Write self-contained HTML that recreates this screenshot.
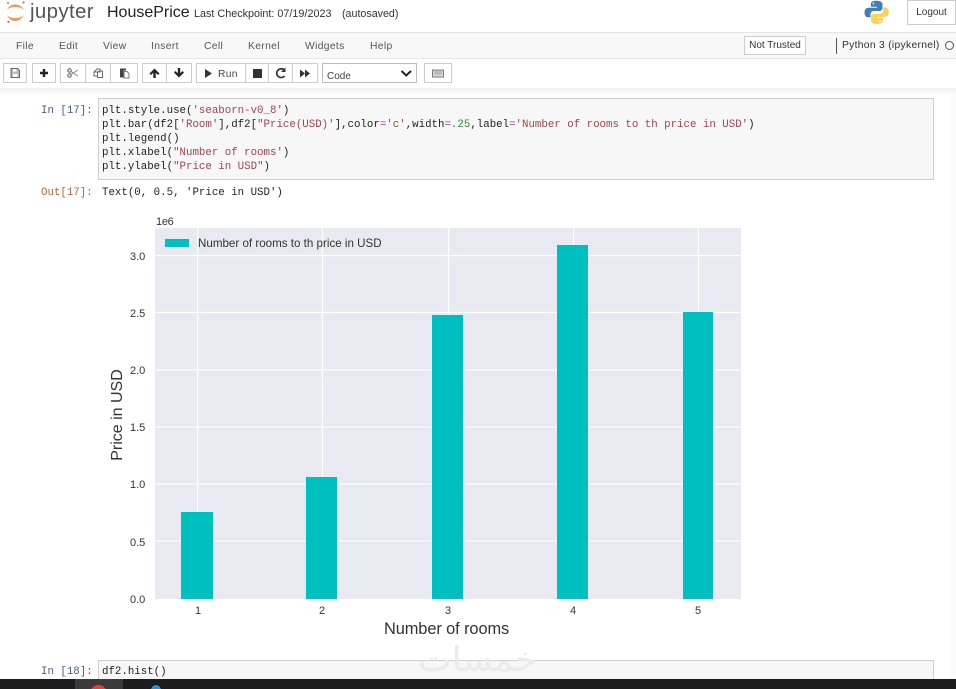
<!DOCTYPE html>
<html><head><meta charset="utf-8"><title>HousePrice</title>
<style>
html,body{margin:0;padding:0;background:#fff}
body{width:956px;height:689px;position:relative;overflow:hidden;font-family:"Liberation Sans",sans-serif;color:#333}
.a{position:absolute;white-space:pre}
.m{font-size:10.3px;color:#555;top:40px;line-height:12px;letter-spacing:.35px;margin-top:.5px}
.btn{position:absolute;top:63px;height:20px;background:#fff;border:1px solid #ccc;box-sizing:border-box}
.btn svg{position:absolute;left:0;top:0}
.code{font-family:"Liberation Mono",monospace;font-size:10.77px;line-height:14px;color:#222}
.s{color:#a4434f}.o{color:#9a3fa8}.n{color:#2e8b3d}
.p{font-family:"Liberation Mono",monospace;font-size:10.77px;line-height:14px}
.t{font-size:11px;color:#333;line-height:12px}
</style></head><body>

<!-- header -->
<svg class="a" style="left:5px;top:0" width="22" height="26" viewBox="0 0 22 26">
<path d="M2 10C5 2.500 15 2.500 19 10C15 6 5 6 2 10Z" fill="#ec9a5e"/>
<path d="M2 15C5 23 15 23 19 15C15 19 5 19 2 15Z" fill="#ec9a5e"/>
<circle cx="18.500" cy="2.500" r="1.100" fill="#a08a7a"/><circle cx="3" cy="3" r="1" fill="#a08a7a"/><circle cx="3.500" cy="22" r="1.200" fill="#a08a7a"/>
</svg>
<div class="a" style="left:30px;top:0;font-size:20.500px;line-height:24px;color:#555;letter-spacing:.35px">jupyter</div>
<div class="a" style="left:107px;top:3px;font-size:16px;line-height:20px;color:#222">HousePrice</div>
<div class="a" style="left:194px;top:8px;font-size:10.8px;line-height:12px;color:#333">Last Checkpoint: 07/19/2023</div>
<div class="a" style="left:342px;top:8px;font-size:10.7px;line-height:12px;color:#333">(autosaved)</div>

<svg class="a" style="left:864px;top:0" width="26" height="25" viewBox="0 0 26 25">
<path d="M12.500 0.800C8 0.800 6.800 2.300 6.800 4.500V6.800H12.800V7.800H4.500C2 7.800 0.500 9.800 0.500 12.500C0.500 15.500 2 17.300 4.200 17.300H6.500V14.300C6.500 12.300 8 11 10 11H15.300C17 11 18.500 9.800 18.500 8V4.500C18.500 2.300 16.500 0.800 12.500 0.800Z" fill="#3f7fb5"/>
<path d="M13 24C17.500 24 18.800 22.500 18.800 20.300V18H12.800V17H21C23.500 17 24.800 15 24.800 12.300C24.800 9.300 23.500 7.500 21.300 7.500H19.200V10.500C19.200 12.500 17.600 13.800 15.600 13.800H10.300C8.500 13.800 7 15 7 16.800V20.300C7 22.500 9 24 13 24Z" fill="#f8d25c"/>
<circle cx="9.500" cy="3.500" r="1" fill="#dfe9f2"/><circle cx="16" cy="21.300" r="1" fill="#fff4d0"/>
</svg>
<div class="a" style="left:907px;top:0;width:49px;height:25px;border:1px solid #ccc;box-sizing:border-box;font-size:10px;line-height:24px;text-align:center;color:#333">Logout</div>

<!-- menubar -->
<div class="a" style="left:0;top:32px;width:956px;height:27px;background:#f8f8f8;border-top:1px solid #e4e4e4;border-bottom:1px solid #e7e7e7;box-sizing:border-box"></div>
<div class="a m" style="left:16px">File</div>
<div class="a m" style="left:59px">Edit</div>
<div class="a m" style="left:103px">View</div>
<div class="a m" style="left:151px">Insert</div>
<div class="a m" style="left:204px">Cell</div>
<div class="a m" style="left:248px">Kernel</div>
<div class="a m" style="left:305px">Widgets</div>
<div class="a m" style="left:370px">Help</div>
<div class="a" style="left:744px;top:36px;width:62px;height:19px;background:#fff;border:1px solid #ccc;box-sizing:border-box;font-size:10px;line-height:18px;text-align:center;color:#333">Not Trusted</div>
<div class="a" style="left:836px;top:38px;width:1px;height:16px;background:#555"></div>
<div class="a" style="left:842px;top:40px;font-size:10.3px;line-height:12px;color:#333;letter-spacing:.3px">Python 3 (ipykernel)</div>
<div class="a" style="left:945px;top:41px;width:9px;height:9px;border:1.500px solid #555;border-radius:50%;box-sizing:border-box"></div>

<!-- toolbar -->
<div class="btn" style="left:3px;width:24px"><svg width="22" height="18" viewBox="0 0 22 18"><path d="M7 4.500h6.500l2 2V13.500H7Z" fill="#bbb" stroke="#666"/><rect x="9" y="5" width="3.500" height="2.500" fill="#fff"/><rect x="9" y="10" width="4.500" height="3" fill="#fff"/></svg></div>
<div class="btn" style="left:32px;width:24px"><svg width="22" height="18" viewBox="0 0 22 18"><path d="M11 5v8M7 9h8" stroke="#222" stroke-width="2.400"/></svg></div>
<div class="btn" style="left:60px;width:26px"><svg width="24" height="18" viewBox="0 0 24 18"><circle cx="8.500" cy="6.500" r="1.700" fill="none" stroke="#555"/><circle cx="8.500" cy="11.500" r="1.700" fill="none" stroke="#555"/><path d="M10 7.500L17 12M10 10.500L17 6" stroke="#888"/></svg></div>
<div class="btn" style="left:85px;width:26px"><svg width="24" height="18" viewBox="0 0 24 18"><path d="M8 8l3-3h3v3H8v4h3.500M14 7h2.500v6.500h-5v-5.500Z" fill="#fff" stroke="#666"/></svg></div>
<div class="btn" style="left:110px;width:28px"><svg width="26" height="18" viewBox="0 0 26 18"><path d="M9 4.500h6v2h-2.500v7H9Z" fill="#444"/><path d="M13 7.500h3l2 2v4.500h-5Z" fill="#fff" stroke="#555" stroke-width=".8"/></svg></div>
<div class="btn" style="left:142px;width:25px"><svg width="23" height="18" viewBox="0 0 23 18"><path d="M11.500 4.500L16.500 9.500L15 11L12.700 8.800V14H10.300V8.800L8 11L6.500 9.500Z" fill="#222"/></svg></div>
<div class="btn" style="left:166px;width:26px"><svg width="24" height="18" viewBox="0 0 24 18"><path d="M12 13.500L7 8.500L8.500 7L10.800 9.200V4H13.200V9.200L15.500 7L17 8.500Z" fill="#222"/></svg></div>
<div class="btn" style="left:196px;width:50px"><svg width="24" height="18" viewBox="0 0 24 18"><path d="M8 5l7 4.500-7 4.500Z" fill="#333"/></svg><span class="a" style="left:21px;top:5px;font-size:10.3px;line-height:12px;color:#444;letter-spacing:.3px">Run</span></div>
<div class="btn" style="left:245px;width:24px"><svg width="22" height="18" viewBox="0 0 22 18"><rect x="7" y="5" width="9" height="9" fill="#333"/></svg></div>
<div class="btn" style="left:268px;width:25px"><svg width="23" height="18" viewBox="0 0 23 18"><path d="M15.500 6.300A4.400 4.400 0 1 0 15.500 12" fill="none" stroke="#333" stroke-width="1.700"/><path d="M16.500 3.500v4.500h-4.500Z" fill="#333"/></svg></div>
<div class="btn" style="left:292px;width:26px"><svg width="24" height="18" viewBox="0 0 24 18"><path d="M7 5.500l5 4-5 4ZM12 5.500l5 4-5 4Z" fill="#333"/></svg></div>
<div class="btn" style="left:322px;width:95px;border-color:#bbb"><span class="a" style="left:4px;top:7px;font-size:10px;line-height:12px;color:#444">Code</span><svg style="left:76px" width="16" height="18" viewBox="0 0 16 18"><path d="M2.500 7l4.700 4.500L12 7" fill="none" stroke="#222" stroke-width="2"/></svg></div>
<div class="btn" style="left:424px;width:28px"><svg width="26" height="18" viewBox="0 0 26 18"><rect x="7.500" y="6" width="11" height="7" fill="#ddd" stroke="#777"/><path d="M9 8h8M9 10h8" stroke="#999"/></svg></div>
<div class="a" style="left:0;top:88px;width:956px;height:6px;background:linear-gradient(#f0f0f0,#fbfbfb)"></div>
<div class="a" style="left:951px;top:94px;width:5px;height:585px;background:#fafafa"></div>

<!-- input 17 -->
<div class="a p" style="left:41px;top:104px;color:#4a5a85">In [17]:</div>
<div class="a" style="left:98px;top:98px;width:836px;height:82px;background:#f7f7f7;border:1px solid #cfcfcf;box-sizing:border-box"></div>
<div class="a code" style="left:102px;top:104px">plt.style.use(<span class="s">'seaborn-v0_8'</span>)
plt.bar(df2[<span class="s">'Room'</span>],df2[<span class="s">"Price(USD)'</span>],color<span class="o">=</span><span class="s">'c'</span>,width<span class="o">=</span><span class="n">.25</span>,label<span class="o">=</span><span class="s">'Number of rooms to th price in USD'</span>)
plt.legend()
plt.xlabel(<span class="s">"Number of rooms'</span>)
plt.ylabel(<span class="s">"Price in USD"</span>)</div>
<div class="a p" style="left:41px;top:186px;color:#b8643f">Out[17]:</div>
<div class="a code" style="left:102px;top:186px">Text(0, 0.5, 'Price in USD')</div>

<!-- plot -->
<div class="a" style="left:155px;top:228px;width:586px;height:371px;background:#e9e9f1"></div>
<svg class="a" style="left:155px;top:228px" width="586" height="371" viewBox="0 0 586 371">
<g stroke="#fff" stroke-width="1.200">
<path d="M0 27.500H586M0 84.500H586M0 142H586M0 199H586M0 256H586M0 313H586"/>
<path d="M42.500 0V371M167.500 0V371M293.500 0V371M418.500 0V371M543.500 0V371"/>
</g>
<g fill="#00bfc0">
<rect x="26" y="284" width="32" height="87"/>
<rect x="151" y="249" width="31" height="122"/>
<rect x="277" y="87" width="31" height="284"/>
<rect x="402" y="17" width="31" height="354"/>
<rect x="528" y="84" width="30" height="287"/>
<rect x="10" y="11" width="24" height="8"/>
</g>
</svg>
<div class="a t" style="left:198px;top:237px;font-size:11.6px;line-height:13px;color:#333">Number of rooms to th price in USD</div>
<div class="a t" style="left:156px;top:216px;letter-spacing:-.3px">1e6</div>
<div class="a t" style="left:130px;top:251px">3.0</div>
<div class="a t" style="left:130px;top:308px">2.5</div>
<div class="a t" style="left:130px;top:365px">2.0</div>
<div class="a t" style="left:130px;top:422px">1.5</div>
<div class="a t" style="left:130px;top:479px">1.0</div>
<div class="a t" style="left:130px;top:537px">0.5</div>
<div class="a t" style="left:130px;top:594px">0.0</div>
<div class="a t" style="left:195px;top:605px">1</div>
<div class="a t" style="left:319px;top:605px">2</div>
<div class="a t" style="left:445px;top:605px">3</div>
<div class="a t" style="left:570px;top:605px">4</div>
<div class="a t" style="left:695px;top:605px">5</div>
<div class="a" style="left:384px;top:620px;font-size:16.4px;line-height:18px;color:#333;letter-spacing:-.1px">Number of rooms</div>
<div class="a" style="left:70px;top:406px;width:96px;height:18px;font-size:16px;line-height:18px;color:#333;text-align:center;transform:rotate(-90deg)">Price in USD</div>

<!-- input 18 -->
<div class="a p" style="left:41px;top:665px;color:#4a5a85">In [18]:</div>
<div class="a" style="left:98px;top:660px;width:836px;height:24px;background:#f7f7f7;border:1px solid #cfcfcf;box-sizing:border-box"></div>
<div class="a code" style="left:102px;top:665px">df2.hist()</div>
<div class="a" dir="rtl" style="left:410px;top:638px;width:135px;height:44px;text-align:center;font-family:'DejaVu Sans',sans-serif;font-size:34px;line-height:44px;color:#ebebeb;transform:scaleX(1.05)">خمسات</div>

<!-- taskbar -->
<div class="a" style="left:0;top:679px;width:956px;height:10px;background:#1c1c1c;overflow:hidden">
<div class="a" style="left:75px;top:0;width:48px;height:10px;background:#3a3a3a"></div>
<div class="a" style="left:90px;top:6px;width:17px;height:17px;background:#d9433b;border-radius:50%"></div>
<div class="a" style="left:151px;top:6px;width:10px;height:10px;background:#2a8fd6;border-radius:50%"></div>
</div>
</body></html>
